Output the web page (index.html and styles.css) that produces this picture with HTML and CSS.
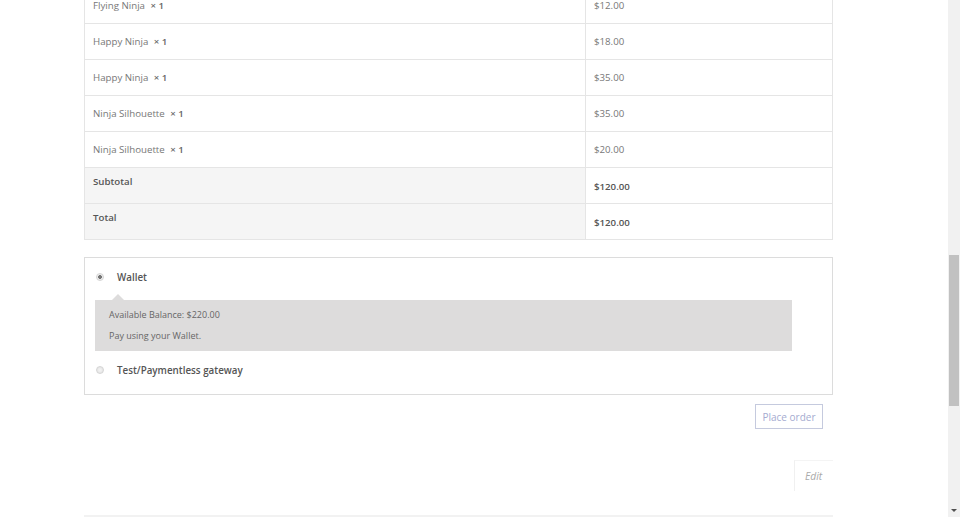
FILE: index.html
```html
<!DOCTYPE html>
<html>
<head>
<meta charset="utf-8">
<link rel="stylesheet" href="styles.css">
</head>
<body>
<div class="page">
  <main class="content">
    <table class="order">
      <tbody>
        <tr><td class="name">Flying Ninja <strong class="qty">× 1</strong></td><td class="price">$12.00</td></tr>
        <tr><td class="name">Happy Ninja <strong class="qty">× 1</strong></td><td class="price">$18.00</td></tr>
        <tr><td class="name">Happy Ninja <strong class="qty">× 1</strong></td><td class="price">$35.00</td></tr>
        <tr><td class="name">Ninja Silhouette <strong class="qty">× 1</strong></td><td class="price">$35.00</td></tr>
        <tr><td class="name">Ninja Silhouette <strong class="qty">× 1</strong></td><td class="price">$20.00</td></tr>
      </tbody>
      <tfoot>
        <tr class="sum"><th>Subtotal</th><td class="price strong">$120.00</td></tr>
        <tr class="sum"><th>Total</th><td class="price strong">$120.00</td></tr>
      </tfoot>
    </table>

    <div class="payment">
      <div class="method">
        <span class="radio checked"></span>
        <span class="method-label">Wallet</span>
      </div>
      <div class="method-box">
        <p>Available Balance: $220.00</p>
        <p>Pay using your Wallet.</p>
      </div>
      <div class="method">
        <span class="radio"></span>
        <span class="method-label">Test/Paymentless gateway</span>
      </div>
    </div>

    <div class="actions">
      <button class="place">Place order</button>
    </div>

    <div class="edit-row">
      <span class="edit">Edit</span>
    </div>
    <div class="bottom-line"></div>
  </main>
  <div class="scrollbar">
    <div class="sb-space"></div>
    <div class="sb-thumb"></div>
    <div class="sb-space2"></div>
    <div class="sb-arrow"></div>
  </div>
</div>
</body>
</html>
```

FILE: styles.css
```css
html, body {
  margin: 0;
  padding: 0;
  height: 100%;
  overflow: hidden;
  background: #fff;
  font-family: "Open Sans", "Liberation Sans", sans-serif;
}

.page {
  display: flex;
  height: 517px;
}

.content {
  flex: 1;
  padding-left: 84px;
  padding-right: 115px;
  overflow: hidden;
}

.order {
  width: 749px;
  border-collapse: collapse;
  margin-top: -13px;
  font-size: 9.7px;
  color: #777;
}

.order td, .order th {
  border: 1px solid #e5e5e5;
  height: 35px;
  padding: 0 8px;
  text-align: left;
  vertical-align: middle;
}

.order td.name {
  width: 484px;
}

.qty {
  font-weight: 600;
  color: #666;
  margin-left: 3px;
}

.order th {
  background: #f5f5f5;
  font-weight: 600;
  color: #555;
  vertical-align: top;
  height: 28px;
  padding-top: 7px;
}

.order td.price.strong {
  font-weight: 600;
  color: #555;
  height: 34px;
  padding-top: 1px;
}

.payment {
  margin-top: 17px;
  border: 1px solid #dcdcdc;
  height: 136px;
  box-sizing: content-box;
  padding: 0 40px 0 10px;
}

.method {
  display: flex;
  align-items: center;
  height: 36px;
  margin-top: 1px;
}

.method + .method-box + .method {
  height: 38px;
  margin-top: 0;
}

.radio {
  width: 6px;
  height: 6px;
  border-radius: 50%;
  border: 1px solid #d5d5d5;
  background: radial-gradient(circle, #f4f4f4 0, #e0e0e0 100%);
  margin-left: 1px;
  margin-right: 13px;
}

.radio.checked {
  background: radial-gradient(circle, #777 0 1.6px, #eee 2.2px);
}

.method-label {
  font-size: 9.8px;
  font-weight: 600;
  color: #555;
}

.method-box {
  position: relative;
  background: #dddcdc;
  margin-top: 5px;
  height: 51px;
  padding: 9px 14px 0;
  box-sizing: border-box;
  font-size: 9px;
  color: #666;
}

.method-box::before {
  content: "";
  position: absolute;
  left: 17px;
  top: -6px;
  border-left: 6px solid transparent;
  border-right: 6px solid transparent;
  border-bottom: 6px solid #dddcdc;
}

.method-box p {
  margin: 0 0 9px;
  line-height: 12px;
}

.actions {
  width: 749px;
  display: flex;
  justify-content: flex-end;
  margin-top: 9px;
}

.place {
  margin-right: 10px;
  width: 68px;
  height: 25px;
  background: #fff;
  border: 1px solid #c5cade;
  color: #a5abd0;
  font-family: "Open Sans", "Liberation Sans", sans-serif;
  font-size: 10px;
  padding: 0;
}

.edit-row {
  width: 749px;
  display: flex;
  justify-content: flex-end;
  margin-top: 31px;
}

.edit {
  width: 39px;
  height: 31px;
  border-left: 1px solid #f0f0f0;
  border-top: 1px solid #f4f4f4;
  box-sizing: border-box;
  padding: 8px 0 0 10px;
  font-size: 10.3px;
  font-style: italic;
  color: #aaa;
}

.bottom-line {
  width: 749px;
  height: 2px;
  background: #f2f2f2;
  margin-top: 24px;
}

.scrollbar {
  width: 12px;
  background: #f1f1f1;
  display: flex;
  flex-direction: column;
  align-items: center;
}

.sb-space { height: 255px; }

.sb-thumb {
  width: 10px;
  height: 151px;
  background: #c1c1c1;
}

.sb-space2 { flex: 1; }

.sb-arrow {
  width: 0;
  height: 0;
  border-left: 3px solid transparent;
  border-right: 3px solid transparent;
  border-top: 3px solid #505050;
  margin-bottom: 5px;
}
```
